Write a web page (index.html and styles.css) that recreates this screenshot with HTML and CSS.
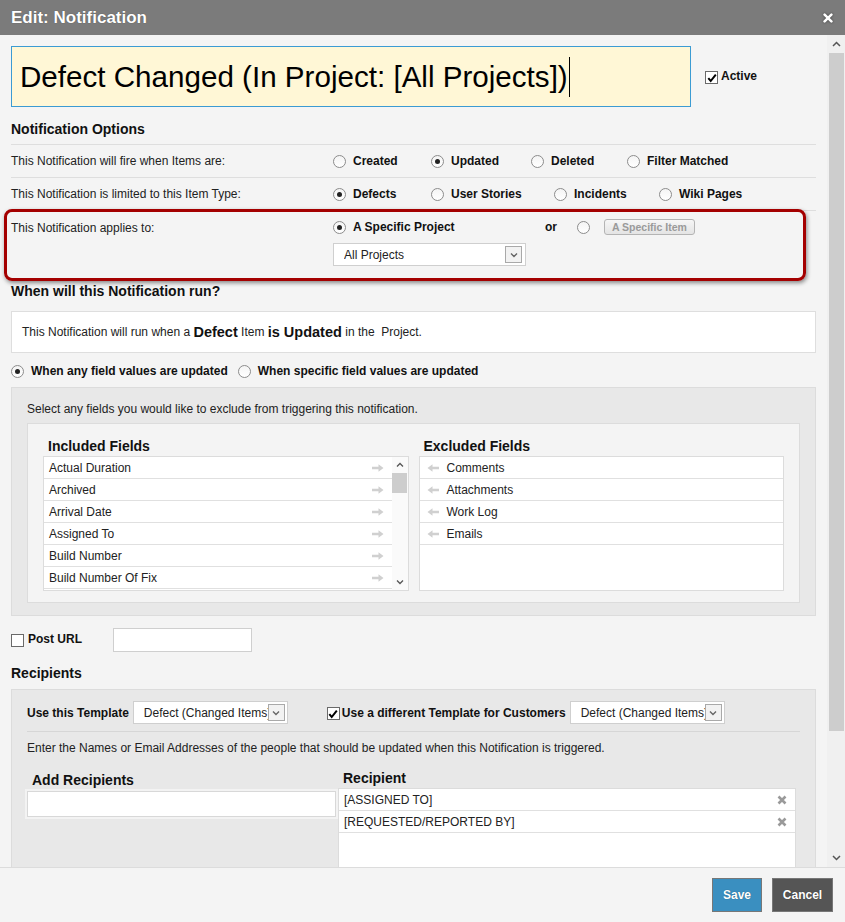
FILE: index.html
```html
<!DOCTYPE html>
<html>
<head>
<meta charset="utf-8">
<title>Edit: Notification</title>
<link rel="stylesheet" href="styles.css">
</head>
<body>
<div class="dialog">
  <div class="titlebar">
    <div class="title">Edit: Notification</div>
    <svg class="close" width="10" height="10" viewBox="0 0 10 10"><path d="M1.6 1.6l6.8 6.8M8.4 1.6l-6.8 6.8" stroke="#fff" stroke-width="2.6" stroke-linecap="round"/></svg>
  </div>

  <div class="main">
    <div class="content">
      <div class="name-row">
        <div class="name-input">Defect Changed (In Project: [All Projects])<span class="caret"></span></div>
        <div class="check-label"><span class="cb"><svg width="10" height="10" viewBox="0 0 10 10"><path d="M1.3 5.2l2.4 2.8L8.8 1.6" fill="none" stroke="#000" stroke-width="2"/></svg></span>Active</div>
      </div>

      <div class="sec-head ruled">Notification Options</div>

      <div class="opt-row">
        <div class="opt-label">This Notification will fire when Items are:</div>
        <div class="opts">
          <span class="opt w98"><span class="radio"></span>Created</span>
          <span class="opt w100"><span class="radio on"></span>Updated</span>
          <span class="opt w96"><span class="radio"></span>Deleted</span>
          <span class="opt"><span class="radio"></span>Filter Matched</span>
        </div>
      </div>

      <div class="opt-row">
        <div class="opt-label">This Notification is limited to this Item Type:</div>
        <div class="opts">
          <span class="opt w98"><span class="radio on"></span>Defects</span>
          <span class="opt w123"><span class="radio"></span>User Stories</span>
          <span class="opt w105"><span class="radio"></span>Incidents</span>
          <span class="opt"><span class="radio"></span>Wiki Pages</span>
        </div>
      </div>

      <div class="opt-row applies">
        <div class="opt-label tall">This Notification applies to:</div>
        <div class="applies-opts">
          <div class="applies-line">
            <span class="opt w212"><span class="radio on"></span>A Specific Project</span>
            <span class="or">or</span>
            <span class="radio item-radio"></span>
            <span class="item-btn">A Specific Item</span>
          </div>
          <div class="select proj-select"><span class="select-text">All Projects</span><span class="drop"><svg width="8" height="6" viewBox="0 0 8 6"><path d="M1 1.5l3 3 3-3" fill="none" stroke="#666" stroke-width="1.4"/></svg></span></div>
        </div>
        <div class="annot"></div>
      </div>

      <div class="sec-head run-head">When will this Notification run?</div>
      <div class="run-box">This Notification will run when a&nbsp;<b>Defect</b>&nbsp;Item&nbsp;<b>is Updated</b>&nbsp;in the &nbsp;Project.</div>

      <div class="run-radios">
        <span class="opt"><span class="radio on"></span>When any field values are updated</span>
        <span class="opt"><span class="radio"></span>When specific field values are updated</span>
      </div>

      <div class="gray-box fields-box">
        <div class="hint">Select any fields you would like to exclude from triggering this notification.</div>
        <div class="fields-panel">
          <div class="field-col">
            <div class="col-head">Included Fields</div>
            <div class="list inc-list">
              <div class="rows">
                <div class="row">Actual Duration<svg class="arrow" width="12" height="8" viewBox="0 0 12 8"><path d="M0 2.8h6.5V0.3L11.5 4 6.5 7.7V5.2H0z" fill="#d0d0d0"/></svg></div>
                <div class="row">Archived<svg class="arrow" width="12" height="8" viewBox="0 0 12 8"><path d="M0 2.8h6.5V0.3L11.5 4 6.5 7.7V5.2H0z" fill="#d0d0d0"/></svg></div>
                <div class="row">Arrival Date<svg class="arrow" width="12" height="8" viewBox="0 0 12 8"><path d="M0 2.8h6.5V0.3L11.5 4 6.5 7.7V5.2H0z" fill="#d0d0d0"/></svg></div>
                <div class="row">Assigned To<svg class="arrow" width="12" height="8" viewBox="0 0 12 8"><path d="M0 2.8h6.5V0.3L11.5 4 6.5 7.7V5.2H0z" fill="#d0d0d0"/></svg></div>
                <div class="row">Build Number<svg class="arrow" width="12" height="8" viewBox="0 0 12 8"><path d="M0 2.8h6.5V0.3L11.5 4 6.5 7.7V5.2H0z" fill="#d0d0d0"/></svg></div>
                <div class="row">Build Number Of Fix<svg class="arrow" width="12" height="8" viewBox="0 0 12 8"><path d="M0 2.8h6.5V0.3L11.5 4 6.5 7.7V5.2H0z" fill="#d0d0d0"/></svg></div>
                <div class="row"></div>
              </div>
              <div class="mini-scroll">
                <span class="sb-btn"><svg width="8" height="6" viewBox="0 0 8 6"><path d="M1 4.5l3-3 3 3" fill="none" stroke="#555" stroke-width="1.3"/></svg></span>
                <span class="mini-thumb"></span>
                <span class="sb-fill"></span>
                <span class="sb-btn"><svg width="8" height="6" viewBox="0 0 8 6"><path d="M1 1.5l3 3 3-3" fill="none" stroke="#555" stroke-width="1.3"/></svg></span>
              </div>
            </div>
          </div>
          <div class="field-col">
            <div class="col-head">Excluded Fields</div>
            <div class="list exc-list">
              <div class="row"><svg class="larrow" width="12" height="8" viewBox="0 0 12 8"><path d="M12 2.8H5.5V0.3L0.5 4 5.5 7.7V5.2H12z" fill="#d0d0d0"/></svg>Comments</div>
              <div class="row"><svg class="larrow" width="12" height="8" viewBox="0 0 12 8"><path d="M12 2.8H5.5V0.3L0.5 4 5.5 7.7V5.2H12z" fill="#d0d0d0"/></svg>Attachments</div>
              <div class="row"><svg class="larrow" width="12" height="8" viewBox="0 0 12 8"><path d="M12 2.8H5.5V0.3L0.5 4 5.5 7.7V5.2H12z" fill="#d0d0d0"/></svg>Work Log</div>
              <div class="row"><svg class="larrow" width="12" height="8" viewBox="0 0 12 8"><path d="M12 2.8H5.5V0.3L0.5 4 5.5 7.7V5.2H12z" fill="#d0d0d0"/></svg>Emails</div>
            </div>
          </div>
        </div>
      </div>

      <div class="post-row">
        <span class="cb empty"></span>
        <span class="post-label">Post URL</span>
        <span class="text-input post-input"></span>
      </div>

      <div class="sec-head recip-head">Recipients</div>

      <div class="gray-box recip-box">
        <div class="tpl-row">
          <span class="bold-label">Use this Template</span>
          <div class="select tpl-select"><span class="select-text">Defect (Changed Items)</span><span class="drop"><svg width="8" height="6" viewBox="0 0 8 6"><path d="M1 1.5l3 3 3-3" fill="none" stroke="#666" stroke-width="1.4"/></svg></span></div>
          <span class="cb cust-cb"><svg width="10" height="10" viewBox="0 0 10 10"><path d="M1.3 5.2l2.4 2.8L8.8 1.6" fill="none" stroke="#000" stroke-width="2"/></svg></span>
          <span class="bold-label">Use a different Template for Customers</span>
          <div class="select tpl-select"><span class="select-text">Defect (Changed Items)</span><span class="drop"><svg width="8" height="6" viewBox="0 0 8 6"><path d="M1 1.5l3 3 3-3" fill="none" stroke="#666" stroke-width="1.4"/></svg></span></div>
        </div>
        <div class="hint enter-hint">Enter the Names or Email Addresses of the people that should be updated when this Notification is triggered.</div>
        <div class="recip-grid">
          <div class="add-col">
            <div class="col-head add-head">Add Recipients</div>
            <div class="text-input add-input"></div>
          </div>
          <div class="rec-col">
            <div class="col-head">Recipient</div>
            <div class="list rec-list">
              <div class="row">[ASSIGNED TO]<svg class="del" width="10" height="10" viewBox="0 0 10 10"><path d="M1.5 1.5l7 7M8.5 1.5l-7 7" stroke="#9a9a9a" stroke-width="2.6"/></svg></div>
              <div class="row">[REQUESTED/REPORTED BY]<svg class="del" width="10" height="10" viewBox="0 0 10 10"><path d="M1.5 1.5l7 7M8.5 1.5l-7 7" stroke="#9a9a9a" stroke-width="2.6"/></svg></div>
              <div class="rec-empty"></div>
            </div>
          </div>
        </div>
      </div>
    </div>

    <div class="vscroll">
      <span class="sb-btn big"><svg width="9" height="6" viewBox="0 0 9 6"><path d="M1 5l3.5-3.5L8 5" fill="none" stroke="#555" stroke-width="1.5"/></svg></span>
      <span class="vthumb"></span>
      <span class="sb-fill"></span>
      <span class="sb-btn big"><svg width="9" height="6" viewBox="0 0 9 6"><path d="M1 1l3.5 3.5L8 1" fill="none" stroke="#555" stroke-width="1.5"/></svg></span>
    </div>
  </div>

  <div class="footer">
    <button class="btn save">Save</button>
    <button class="btn cancel">Cancel</button>
  </div>
</div>
</body>
</html>
```

FILE: styles.css
```css
* { box-sizing: border-box; }
html, body { margin: 0; padding: 0; }
body {
  width: 845px;
  height: 922px;
  overflow: hidden;
  background: #f4f4f4;
  font-family: "Liberation Sans", Arial, sans-serif;
  font-size: 12px;
  color: #222;
}

.dialog { display: flex; flex-direction: column; height: 922px; }

/* title bar */
.titlebar {
  height: 35px;
  flex: 0 0 35px;
  background: #7b7b7b;
  display: flex;
  align-items: center;
  justify-content: space-between;
  padding: 0 12px 0 11px;
}
.title {
  color: #fff;
  font-size: 17px;
  font-weight: bold;
  text-shadow: 0 0 1px rgba(0,0,0,0.45);
}
.close { filter: drop-shadow(0 0 1px rgba(0,0,0,0.5)); }

/* main scrolling area */
.main { flex: 0 0 832px; height: 832px; display: flex; overflow: hidden; }
.content { width: 827px; padding: 11px 11px 0 11px; overflow: hidden; }

.vscroll {
  width: 18px;
  background: #f0f0f0;
  display: flex;
  flex-direction: column;
  align-items: center;
}
.sb-btn { display: flex; align-items: center; justify-content: center; height: 16px; width: 100%; flex: 0 0 auto; }
.sb-btn.big { height: 18px; }
.sb-fill { flex: 1; }
.vthumb { width: 15px; height: 678px; background: #cdcdcd; flex: 0 0 auto; }

/* name row */
.name-row { display: flex; align-items: center; }
.name-input {
  width: 680px;
  height: 61px;
  border: 1px solid #3b9bd3;
  background: #fff7d6;
  color: #000;
  font-size: 29.6px;
  padding-left: 8px;
  display: flex;
  align-items: center;
  white-space: nowrap;
}
.caret { display: inline-block; width: 1px; height: 40px; background: #000; margin-left: 1px; }
.check-label { display: flex; align-items: center; margin-left: 14px; font-weight: bold; color: #111; margin-top: -2px; }
.cb {
  width: 13px;
  height: 13px;
  border: 1px solid #6a6a6a;
  background: #fff;
  display: inline-flex;
  align-items: center;
  justify-content: center;
  flex: 0 0 auto;
}
.check-label .cb { margin-right: 3px; margin-top: 4px; }

/* headings */
.sec-head { font-size: 14px; font-weight: bold; line-height: 17px; color: #111; margin-top: 14px; }
.sec-head.ruled { padding-bottom: 6px; border-bottom: 1px solid #dedede; }
.sec-head.run-head { margin-top: 0; }

/* option rows */
.opt-row {
  display: grid;
  grid-template-columns: 322px 1fr;
  align-items: center;
  height: 33px;
  border-bottom: 1px solid #dedede;
  position: relative;
}
.opt-label { color: #222; }
.opts { display: flex; align-items: center; }
.opt { display: inline-flex; align-items: center; font-weight: bold; color: #111; white-space: nowrap; }
.w98 { width: 98px; } .w100 { width: 100px; } .w96 { width: 96px; }
.w123 { width: 123px; } .w105 { width: 105px; } .w212 { width: 212px; }

.radio {
  width: 13px;
  height: 13px;
  border-radius: 50%;
  border: 1px solid #8c8c8c;
  background: linear-gradient(#f4f4f4, #fff);
  margin-right: 7px;
  position: relative;
  flex: 0 0 auto;
  display: inline-block;
}
.radio.on::after {
  content: "";
  position: absolute;
  left: 3px; top: 3px;
  width: 5px; height: 5px;
  border-radius: 50%;
  background: #222;
}

.opt-row.applies { height: auto; border-bottom: none; align-items: start; padding: 8px 0 17px; }
.opt-label.tall { line-height: 18px; }
.applies-line { display: flex; align-items: center; height: 16px; }
.or { font-weight: bold; color: #111; margin-right: 20px; }
.radio.item-radio { margin-right: 14px; }
.item-btn {
  height: 16px;
  padding: 0 7px;
  border: 1px solid #b4b4b4;
  border-radius: 3px;
  background: linear-gradient(#f6f6f6, #e4e4e4);
  color: #9a9a9a;
  font-size: 10.5px;
  font-weight: bold;
  display: inline-flex;
  align-items: center;
}
.select {
  background: #fff;
  border: 1px solid #cfcfcf;
  display: flex;
  align-items: center;
  justify-content: space-between;
  overflow: hidden;
}
.select-text { white-space: nowrap; overflow: hidden; color: #222; }
.drop {
  width: 17px;
  height: 17px;
  border: 1px solid #a9a9a9;
  background: #f2f2f2;
  display: flex;
  align-items: center;
  justify-content: center;
  flex: 0 0 auto;
}
.proj-select { width: 193px; height: 23px; margin-top: 8px; padding: 0 3px 0 10px; }
.annot {
  position: absolute;
  left: -7px;
  top: -2px;
  width: 802px;
  height: 72px;
  border: 3px solid #a40000;
  border-radius: 8px;
  box-shadow: 1px 2px 4px rgba(0,0,0,0.45);
  pointer-events: none;
}

/* run box */
.run-box {
  margin-top: 11px;
  height: 42px;
  background: #fff;
  border: 1px solid #dedede;
  padding-left: 10px;
  display: flex;
  align-items: center;
  white-space: nowrap;
}
.run-box b { font-size: 14.5px; color: #111; }
.run-radios { display: flex; align-items: center; height: 16px; margin-top: 10px; gap: 10px; }

/* gray boxes */
.gray-box { background: #e8e8e8; border: 1px solid #dcdcdc; padding: 0 15px; }
.fields-box { margin-top: 8px; padding-top: 14px; padding-bottom: 12px; }
.hint { line-height: 14px; color: #222; }
.fields-panel {
  margin-top: 7px;
  background: #f4f4f4;
  border: 1px solid #dcdcdc;
  padding: 14px 15px 11px;
  display: grid;
  grid-template-columns: 1fr 1fr;
  gap: 10px;
}
.col-head { font-size: 14px; font-weight: bold; line-height: 17px; color: #111; margin-left: 5px; margin-bottom: 1px; }
.list { background: #fff; border: 1px solid #dcdcdc; height: 135px; overflow: hidden; }
.inc-list { display: flex; }
.rows { flex: 1; overflow: hidden; }
.row {
  height: 22px;
  border-bottom: 1px solid #e0e0e0;
  display: flex;
  align-items: center;
  padding-left: 5px;
  color: #222;
  white-space: nowrap;
}
.inc-list .row { justify-content: space-between; padding-right: 8px; }
.mini-scroll { width: 16px; display: flex; flex-direction: column; align-items: center; background: #fafafa; }
.mini-thumb { width: 15px; height: 20px; background: #cdcdcd; flex: 0 0 auto; }
.exc-list .row { padding-left: 7px; }
.larrow { margin-right: 8px; }

/* post url */
.post-row { display: flex; align-items: center; margin-top: 12px; height: 24px; }
.post-label { font-weight: bold; color: #111; margin-left: 4px; width: 85px; margin-top: -2px; }
.text-input { background: #fff; border: 1px solid #cfcfcf; display: block; }
.post-input { width: 139px; height: 24px; }
.recip-head { margin-top: 13px; }

/* recipients */
.recip-box { margin-top: 7px; padding-top: 11px; height: 300px; }
.tpl-row {
  display: flex;
  align-items: center;
  height: 23px;
  padding-bottom: 7px;
  box-sizing: content-box;
  border-bottom: 1px solid #d6d6d6;
}
.bold-label { font-weight: bold; color: #111; white-space: nowrap; }
.tpl-select { width: 155px; height: 23px; padding: 0 2px 0 10px; margin-left: 4px; }
.tpl-select .select-text { flex: 1; }
.cust-cb { margin-left: 39px; margin-right: 2px; margin-top: 2px; }
.enter-hint { margin-top: 9px; }
.recip-grid { display: grid; grid-template-columns: 309px 458px; gap: 2px; margin-top: 15px; }
.add-head { margin-top: 2px; margin-bottom: 2px; }
.add-input { width: 309px; height: 26px; border-color: #d8d8d8; box-shadow: 0 0 0 2px #f3f3f3; }
.rec-list { height: 200px; }
.rec-list .row { justify-content: space-between; padding-right: 8px; }

/* footer */
.footer {
  flex: 0 0 55px;
  border-top: 1px solid #dcdcdc;
  background: #f4f4f4;
  display: flex;
  justify-content: flex-end;
  align-items: flex-start;
  padding: 10px 12px 0 0;
  gap: 10px;
}
.btn {
  height: 34px;
  border: 1px solid #777;
  color: #fff;
  font-family: "Liberation Sans", Arial, sans-serif;
  font-size: 12px;
  font-weight: bold;
  padding: 0;
  text-shadow: 0 0 1px rgba(0,0,0,0.4);
}
.save { width: 50px; background: #3a8fc0; }
.cancel { width: 61px; background: #555555; }
```
